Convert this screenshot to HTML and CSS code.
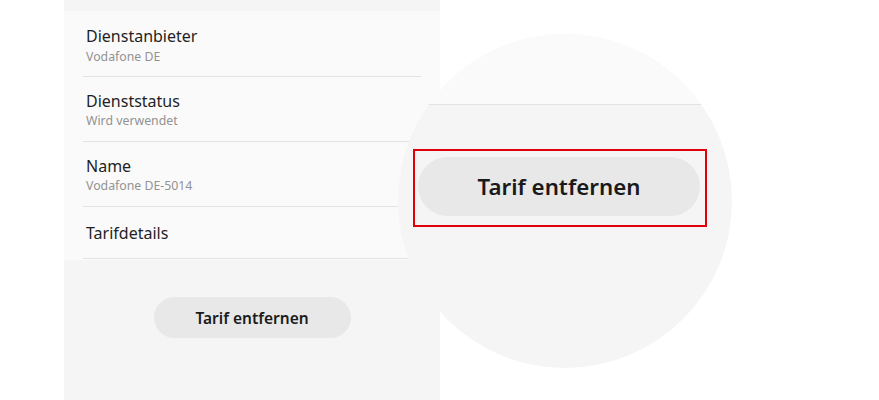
FILE: index.html
```html
<!DOCTYPE html>
<html lang="de">
<head>
<meta charset="utf-8">
<title>Tarif entfernen</title>
<link rel="stylesheet" href="styles.css">
</head>
<body>
<div class="stage">
  <section class="phone">
    <ul class="list">
      <li class="row first">
        <div class="title">Dienstanbieter</div>
        <div class="sub">Vodafone DE</div>
      </li>
      <li class="row">
        <div class="title">Dienststatus</div>
        <div class="sub">Wird verwendet</div>
      </li>
      <li class="row">
        <div class="title">Name</div>
        <div class="sub">Vodafone DE-5014</div>
      </li>
      <li class="row single">
        <div class="title">Tarifdetails</div>
      </li>
    </ul>
    <div class="actions">
      <button class="btn">Tarif entfernen</button>
    </div>
  </section>
  <div class="magnifier">
    <div class="mag-top"></div>
    <div class="mag-body">
      <div class="highlight">
        <button class="btn btn-big">Tarif entfernen</button>
      </div>
    </div>
  </div>
</div>
</body>
</html>
```

FILE: styles.css
```css
* { box-sizing: border-box; }
html, body { margin: 0; padding: 0; background: #ffffff; }
body {
  font-family: "Noto Sans", "Open Sans", sans-serif;
  color: #1f1f1f;
  width: 879px;
  height: 400px;
  overflow: hidden;
}
.stage {
  position: relative;
  display: flex;
  height: 400px;
  padding-left: 64px;
}
.phone {
  width: 376px;
  height: 400px;
  background: #f5f5f5;
  padding-top: 11px;
}
.list {
  list-style: none;
  margin: 0;
  padding: 0 19px 1px;
  background: #fafafa;
}
.row {
  padding: 14px 0 12px 3px;
  border-bottom: 1px solid #e3e3e3;
}
.row.first { padding-top: 15px; padding-bottom: 11px; }
.row.first .sub { margin-top: 3px; }
.row.single { padding: 16px 0 15px 3px; }
.title {
  font-size: 16px;
  line-height: 20px;
  color: #1f1f1f;
}
.sub {
  margin-top: 2px;
  font-size: 12.3px;
  line-height: 16px;
  color: #929292;
}
.actions {
  display: flex;
  justify-content: center;
  padding-top: 37px;
}
.btn {
  width: 197px;
  height: 41px;
  border: none;
  border-radius: 21px;
  background: #e8e8e8;
  font-family: "Noto Sans", "Open Sans", sans-serif;
  font-size: 15.5px;
  font-weight: 600;
  color: #1a1a1a;
  padding: 0;
}
.magnifier {
  position: absolute;
  left: 398px;
  top: 34px;
  width: 334px;
  height: 334px;
  border-radius: 50%;
  overflow: hidden;
  background: #f5f5f5;
  display: flex;
  flex-direction: column;
}
.mag-top {
  height: 71px;
  flex: none;
  margin-left: -20px;
  background: #fafafa;
  border-bottom: 1px solid #e2e2e2;
  width: 324px;
}
.mag-body {
  padding: 44px 0 0 15px;
}
.highlight {
  width: 294px;
  height: 78px;
  border: 2px solid #e0000c;
  padding: 6px 5px 0 3px;
}
.btn-big {
  width: 282px;
  height: 59px;
  border-radius: 30px;
  font-size: 22.3px;
}
```
